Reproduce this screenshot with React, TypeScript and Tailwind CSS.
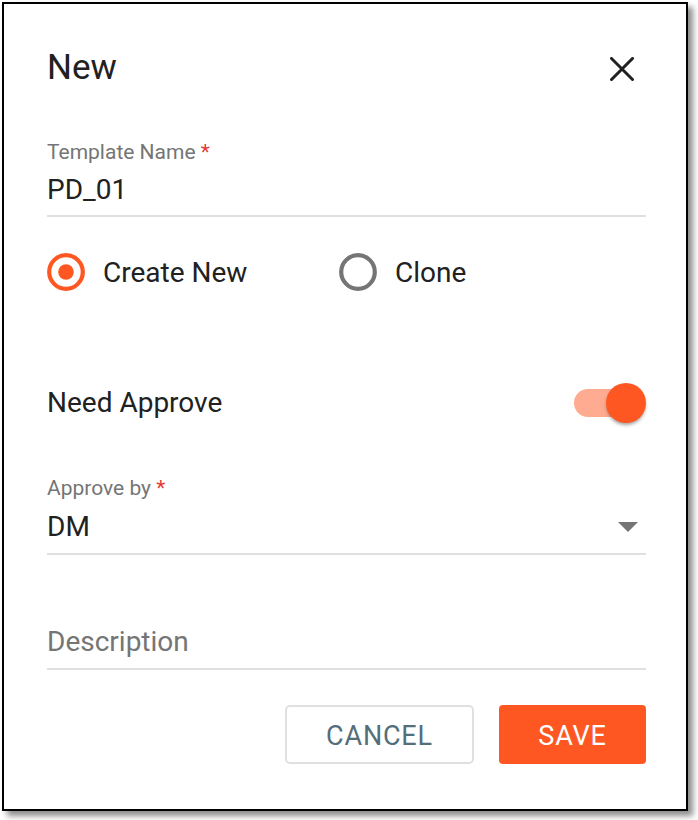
import { useState } from "react";

const ORANGE = "#FF5722";

function RadioDot({ checked }: { checked: boolean }) {
  return (
    <svg width="38" height="38" viewBox="0 0 38 38" className="shrink-0">
      <circle
        cx="19"
        cy="19"
        r="16.8"
        fill="none"
        stroke={checked ? ORANGE : "#757575"}
        strokeWidth="4.2"
      />
      {checked && <circle cx="19" cy="19" r="7.8" fill={ORANGE} />}
    </svg>
  );
}

function Toggle({ on, onChange }: { on: boolean; onChange: (v: boolean) => void }) {
  return (
    <button
      type="button"
      onClick={() => onChange(!on)}
      className="relative w-[72px] h-[40px] shrink-0"
    >
      <span
        className={`absolute left-0 top-[6px] w-[70px] h-[28px] rounded-full ${
          on ? "bg-[#FFAB91]" : "bg-[#bdbdbd]"
        }`}
      />
      <span
        className={`absolute top-0 w-[40px] h-[40px] rounded-full shadow-[0_3px_3px_-1px_rgba(0,0,0,0.25),0_2px_4px_0_rgba(0,0,0,0.14)] ${
          on ? "right-0 bg-[#FF5722]" : "left-0 bg-[#fafafa]"
        }`}
      />
    </button>
  );
}

export default function App() {
  const [mode, setMode] = useState<"new" | "clone">("new");
  const [needApprove, setNeedApprove] = useState(true);

  return (
    <div className="min-h-screen bg-white pt-[2px] pl-[2px] font-['Roboto',sans-serif]">
      <div className="w-[686px] h-[809px] border-2 border-black bg-white shadow-[5px_5px_6px_0_rgba(0,0,0,0.45)] pl-[43px] pr-[40px] pt-[35px] flex flex-col">
        {/* header */}
        <div className="flex items-center justify-between h-[56px]">
          <h2 className="text-[35px] leading-none text-[#212121]">New</h2>
          <button
            type="button"
            className="w-[48px] h-[48px] mt-[3px] flex items-center justify-center"
          >
            <svg width="24" height="24" viewBox="0 0 24 24">
              <path
                d="M1.5 1.5 L22.5 22.5 M22.5 1.5 L1.5 22.5"
                stroke="#212121"
                strokeWidth="3"
                strokeLinecap="square"
              />
            </svg>
          </button>
        </div>

        {/* template name */}
        <div className="mt-[47px] border-b-2 border-[#e0e0e0] pb-[11px]">
          <div className="text-[21px] leading-none text-[#757575]">
            Template Name <span className="text-[#e53935]">*</span>
          </div>
          <div className="mt-[13px] text-[28px] leading-none text-[#212121]">PD_01</div>
        </div>

        {/* radios */}
        <div className="mt-[36px] flex items-center h-[38px]">
          <button
            type="button"
            onClick={() => setMode("new")}
            className="w-[292px] flex items-center gap-[18px]"
          >
            <RadioDot checked={mode === "new"} />
            <span className="text-[28px] leading-none text-[#212121] mt-[2px]">Create New</span>
          </button>
          <button
            type="button"
            onClick={() => setMode("clone")}
            className="flex items-center gap-[18px]"
          >
            <RadioDot checked={mode === "clone"} />
            <span className="text-[28px] leading-none text-[#212121] mt-[2px]">Clone</span>
          </button>
        </div>

        {/* need approve */}
        <div className="mt-[92px] h-[40px] flex items-center justify-between">
          <span className="text-[28px] leading-none text-[#212121]">Need Approve</span>
          <Toggle on={needApprove} onChange={setNeedApprove} />
        </div>

        {/* approve by */}
        <div className="mt-[55px] border-b-2 border-[#e0e0e0] pb-[12px]">
          <div className="text-[21px] leading-none text-[#757575]">
            Approve by <span className="text-[#e53935]">*</span>
          </div>
          <div className="mt-[14px] h-[28px] flex items-center justify-between">
            <span className="text-[28px] leading-none text-[#212121]">DM</span>
            <svg width="36" height="28" viewBox="0 0 36 28">
              <path d="M8 9 L28 9 L18 19 Z" fill="#757575" />
            </svg>
          </div>
        </div>

        {/* description */}
        <div className="mt-[73px] border-b-2 border-[#e0e0e0] pb-[12px]">
          <div className="text-[28px] leading-none text-[#757575]">Description</div>
        </div>

        {/* actions */}
        <div className="mt-[35px] flex justify-end gap-[25px]">
          <button
            type="button"
            className="w-[189px] h-[59px] pt-[3px] border-2 border-[#e0e0e0] rounded-[5px] text-[27px] leading-none text-[#546E7A] tracking-[0.03em]"
          >
            CANCEL
          </button>
          <button
            type="button"
            className="w-[147px] h-[59px] pt-[3px] rounded-[4px] bg-[#FF5722] text-[27px] leading-none text-white tracking-[0.03em]"
          >
            SAVE
          </button>
        </div>
      </div>
    </div>
  );
}
